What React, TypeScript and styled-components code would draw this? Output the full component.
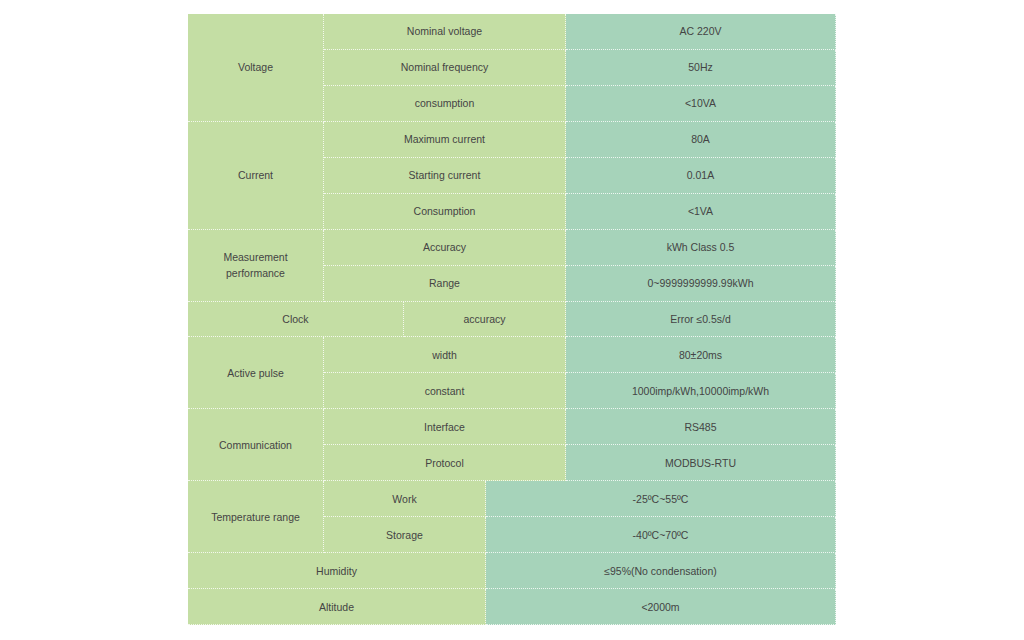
import React from "react";
import styled, { createGlobalStyle } from "styled-components";

const Global = createGlobalStyle`
  html, body { margin: 0; padding: 0; background: #ffffff; }
  body { font-family: "Liberation Sans", Arial, sans-serif; }
`;

const Page = styled.div`
  display: flex;
  justify-content: center;
  padding-top: 14px;
`;

const Grid = styled.div`
  display: grid;
  grid-template-columns: 136px 80px 82px 80px 270px;
  grid-template-rows: repeat(17, 1fr);
  width: 648px;
  height: 611px;
`;

type Tone = "green" | "teal";

const Cell = styled.div<{ $col: string; $row: string; $tone: Tone }>`
  grid-column: ${(p) => p.$col};
  grid-row: ${(p) => p.$row};
  box-sizing: border-box;
  display: flex;
  align-items: center;
  justify-content: center;
  text-align: center;
  padding: 0 8px;
  background: ${(p) => (p.$tone === "green" ? "#c4dea4" : "#a6d3ba")};
  border-right: 1px dotted rgba(255, 255, 255, 0.8);
  border-bottom: 1px dotted rgba(255, 255, 255, 0.8);
  color: #444444;
  font-size: 10.5px;
  line-height: 16px;
`;

type Item = { col: string; row: string; tone: Tone; text: React.ReactNode };

const items: Item[] = [
  { col: "1 / 2", row: "1 / 4", tone: "green", text: "Voltage" },
  { col: "2 / 5", row: "1 / 2", tone: "green", text: "Nominal voltage" },
  { col: "5 / 6", row: "1 / 2", tone: "teal", text: "AC 220V" },
  { col: "2 / 5", row: "2 / 3", tone: "green", text: "Nominal frequency" },
  { col: "5 / 6", row: "2 / 3", tone: "teal", text: "50Hz" },
  { col: "2 / 5", row: "3 / 4", tone: "green", text: "consumption" },
  { col: "5 / 6", row: "3 / 4", tone: "teal", text: "<10VA" },

  { col: "1 / 2", row: "4 / 7", tone: "green", text: "Current" },
  { col: "2 / 5", row: "4 / 5", tone: "green", text: "Maximum current" },
  { col: "5 / 6", row: "4 / 5", tone: "teal", text: "80A" },
  { col: "2 / 5", row: "5 / 6", tone: "green", text: "Starting current" },
  { col: "5 / 6", row: "5 / 6", tone: "teal", text: "0.01A" },
  { col: "2 / 5", row: "6 / 7", tone: "green", text: "Consumption" },
  { col: "5 / 6", row: "6 / 7", tone: "teal", text: "<1VA" },

  { col: "1 / 2", row: "7 / 9", tone: "green", text: <>Measurement<br />performance</> },
  { col: "2 / 5", row: "7 / 8", tone: "green", text: "Accuracy" },
  { col: "5 / 6", row: "7 / 8", tone: "teal", text: "kWh Class 0.5" },
  { col: "2 / 5", row: "8 / 9", tone: "green", text: "Range" },
  { col: "5 / 6", row: "8 / 9", tone: "teal", text: "0~9999999999.99kWh" },

  { col: "1 / 3", row: "9 / 10", tone: "green", text: "Clock" },
  { col: "3 / 5", row: "9 / 10", tone: "green", text: "accuracy" },
  { col: "5 / 6", row: "9 / 10", tone: "teal", text: "Error ≤0.5s/d" },

  { col: "1 / 2", row: "10 / 12", tone: "green", text: "Active pulse" },
  { col: "2 / 5", row: "10 / 11", tone: "green", text: "width" },
  { col: "5 / 6", row: "10 / 11", tone: "teal", text: "80±20ms" },
  { col: "2 / 5", row: "11 / 12", tone: "green", text: "constant" },
  { col: "5 / 6", row: "11 / 12", tone: "teal", text: "1000imp/kWh,10000imp/kWh" },

  { col: "1 / 2", row: "12 / 14", tone: "green", text: "Communication" },
  { col: "2 / 5", row: "12 / 13", tone: "green", text: "Interface" },
  { col: "5 / 6", row: "12 / 13", tone: "teal", text: "RS485" },
  { col: "2 / 5", row: "13 / 14", tone: "green", text: "Protocol" },
  { col: "5 / 6", row: "13 / 14", tone: "teal", text: "MODBUS-RTU" },

  { col: "1 / 2", row: "14 / 16", tone: "green", text: "Temperature range" },
  { col: "2 / 4", row: "14 / 15", tone: "green", text: "Work" },
  { col: "4 / 6", row: "14 / 15", tone: "teal", text: "-25ºC~55ºC" },
  { col: "2 / 4", row: "15 / 16", tone: "green", text: "Storage" },
  { col: "4 / 6", row: "15 / 16", tone: "teal", text: "-40ºC~70ºC" },

  { col: "1 / 4", row: "16 / 17", tone: "green", text: "Humidity" },
  { col: "4 / 6", row: "16 / 17", tone: "teal", text: "≤95%(No condensation)" },
  { col: "1 / 4", row: "17 / 18", tone: "green", text: "Altitude" },
  { col: "4 / 6", row: "17 / 18", tone: "teal", text: "<2000m" },
];

export default function App() {
  return (
    <>
      <Global />
      <Page>
        <Grid>
          {items.map((it, i) => (
            <Cell key={i} $col={it.col} $row={it.row} $tone={it.tone}>
              {it.text}
            </Cell>
          ))}
        </Grid>
      </Page>
    </>
  );
}
